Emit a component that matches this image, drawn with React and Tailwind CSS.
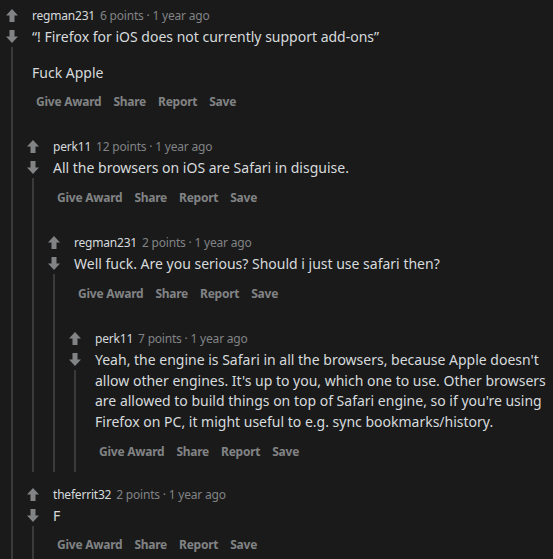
import React from "react";

const Up = () => (
  <svg width="12" height="13" viewBox="0 0 12 13" className="block">
    <polygon points="6,0 12,6.5 8.5,6.5 8.5,13 3.5,13 3.5,6.5 0,6.5" fill="#818384" />
  </svg>
);
const Down = () => (
  <svg width="12" height="13" viewBox="0 0 12 13" className="block">
    <polygon points="6,13 12,6.5 8.5,6.5 8.5,0 3.5,0 3.5,6.5 0,6.5" fill="#818384" />
  </svg>
);

function Comment({ user, points, paras, children, className = "" }) {
  return (
    <div className={"flex " + className}>
      <div className="w-[24px] shrink-0 flex flex-col items-center">
        <div className="h-[21px] flex items-center justify-center">
          <Up />
        </div>
        <div className="h-[21px] flex items-center justify-center">
          <Down />
        </div>
        <div className="flex-1 w-[2px] bg-[#3a3a3c]" />
      </div>
      <div className="flex-1 min-w-0 -ml-[3px]">
        <div className="pl-[11px] pt-[3px] pb-[8px]">
          <div className="h-[16px] flex items-center text-[12px] leading-[16px] whitespace-nowrap tracking-[-0.2px]">
            <span className="text-[#d7dadc]">{user}</span>
            <span className="ml-[5px] text-[#818384]">{points} · 1 year ago</span>
          </div>
          <div className="mt-[3px] text-[14px] leading-[20.7px] text-[#d7dadc]">
            {paras.map((p, i) => (
              <div key={i} className={i > 0 ? "mt-[15px]" : ""}>
                {p.map((l, j) => (
                  <div key={j} className="whitespace-nowrap">{l}</div>
                ))}
              </div>
            ))}
          </div>
          <div className="mt-[7px] h-[24px] flex items-center text-[12px] font-bold text-[#818384] leading-[16px] tracking-[-0.25px] whitespace-nowrap">
            <span className="px-[4px] mr-[4px]">Give Award</span>
            <span className="px-[4px] mr-[4px]">Share</span>
            <span className="px-[4px] mr-[4px]">Report</span>
            <span className="px-[4px] mr-[4px]">Save</span>
          </div>
        </div>
        {children}
      </div>
    </div>
  );
}

export default function App() {
  return (
    <div
      className="min-h-screen h-[559px] overflow-hidden bg-[#1a1a1b] pt-[5px]"
      style={{ fontFamily: '"Noto Sans", "Open Sans", sans-serif' }}
    >
      <Comment
        user="regman231"
        points="6 points"
        paras={[["“! Firefox for iOS does not currently support add-ons”"], ["Fuck Apple"]]}
      >
        <Comment
          className="mt-[14px]"
          user="perk11"
          points="12 points"
          paras={[["All the browsers on iOS are Safari in disguise."]]}
        >
          <Comment
            className="mt-[14px]"
            user="regman231"
            points="2 points"
            paras={[["Well fuck. Are you serious? Should i just use safari then?"]]}
          >
            <Comment
              className="mt-[14px]"
              user="perk11"
              points="7 points"
              paras={[
                [
                  "Yeah, the engine is Safari in all the browsers, because Apple doesn't",
                  "allow other engines. It's up to you, which one to use. Other browsers",
                  "are allowed to build things on top of Safari engine, so if you're using",
                  "Firefox on PC, it might useful to e.g. sync bookmarks/history.",
                ],
              ]}
            />
          </Comment>
        </Comment>
        <Comment
          className="mt-[12px]"
          user="theferrit32"
          points="2 points"
          paras={[["F"]]}
        />
      </Comment>
    </div>
  );
}
